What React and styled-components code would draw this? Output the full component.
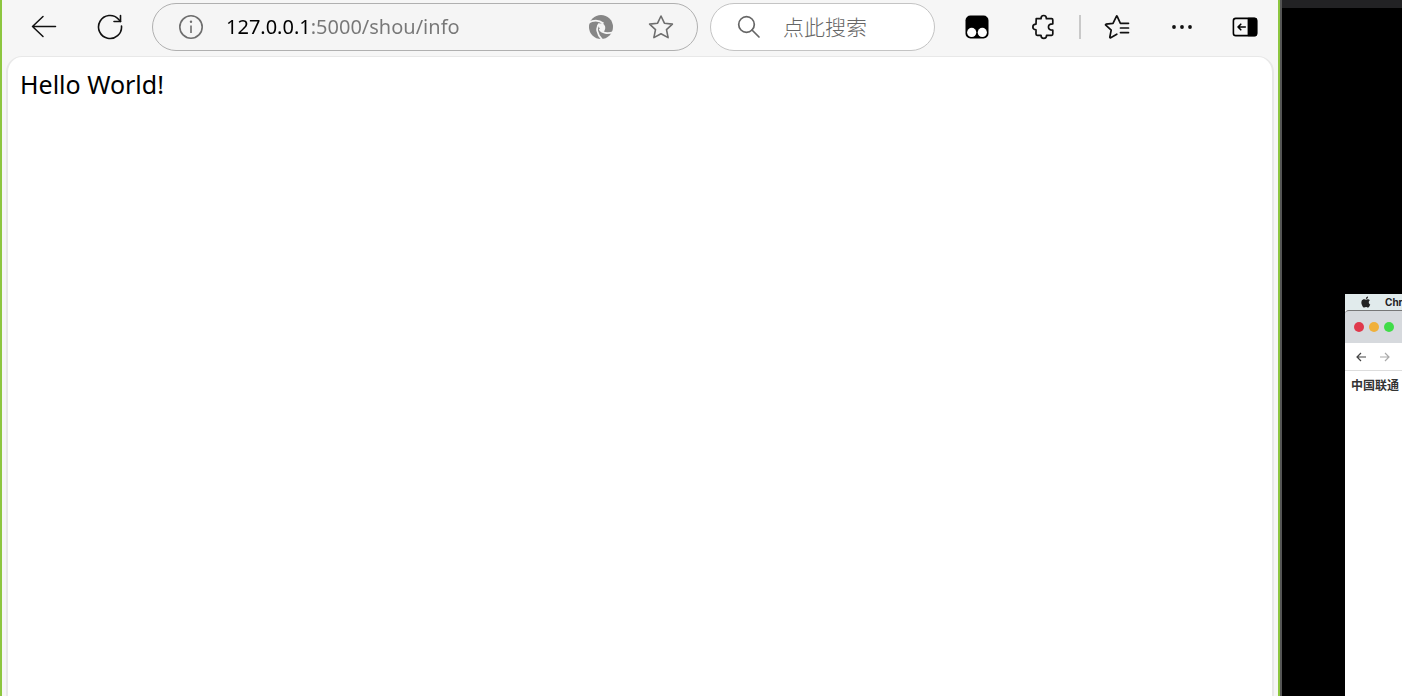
import React, { useState } from "react";
import styled, { createGlobalStyle } from "styled-components";

const GlobalStyle = createGlobalStyle`
  * {
    box-sizing: border-box;
  }
  body {
    margin: 0;
    background-color: #000;
    font-family: "Noto Sans", "Noto Sans CJK SC", sans-serif;
  }
`;

const BackIcon = () => (
  <svg width="26" height="26" viewBox="0 0 26 26" fill="none" stroke="#111" strokeWidth="1.5" strokeLinecap="round" strokeLinejoin="round">
    <path d="M24.5 12.5H1.5M12 2.5 1.5 12.5 12 22.5" />
  </svg>
);

const ReloadIcon = () => (
  <svg width="26" height="26" viewBox="0 0 26 26" fill="none" stroke="#111" strokeWidth="1.6" strokeLinecap="round" strokeLinejoin="round">
    <path d="M24.5 12A11.5 11.5 0 1 1 21.5 5.2L23.5 7.5" />
    <path d="M23.5 1.5V7.5H17" />
  </svg>
);

const InfoIcon = () => (
  <svg width="26" height="26" viewBox="0 0 26 26" fill="none" stroke="#6e6e6e" strokeWidth="1.6">
    <circle cx="13" cy="13" r="11.2" />
    <path d="M13 11.5V19" />
    <circle cx="13" cy="7.8" r="1.2" fill="#6e6e6e" stroke="none" />
  </svg>
);

const SwirlIcon = () => (
  <svg width="26" height="26" viewBox="0 0 26 26" fill="none" stroke="#f5f5f5" strokeWidth="1.7">
    <circle cx="13" cy="13" r="12" fill="#868686" stroke="none" />
    <path d="M0 9C5 6 11 5.800 15.500 9.500" />
    <path d="M11.500 9.500C7.500 13 8.500 20 14.500 26" />
    <path d="M11.500 15C13.500 19.500 20 20 26 17.800" />
    <path d="M9.800 11.500C11 9 14 8.500 16 10.500C18 12.800 17.500 16 15.500 18C13 17.500 11.800 15.800 11.500 14Z" fill="#f5f5f5" stroke="none" />
    <path d="M0 3V8.500L5 3Z" fill="#f5f5f5" stroke="none" />
  </svg>
);

const StarIcon = () => (
  <svg width="26" height="26" viewBox="0 0 26 26" fill="none" stroke="#6e6e6e" strokeWidth="1.6" strokeLinejoin="round">
    <path d="M13 2 16.4 9.2 24.4 10.1 18.5 15.6 20.1 23.6 13 19.7 5.9 23.6 7.5 15.6 1.6 10.1 9.6 9.2Z" />
  </svg>
);

const SearchIcon = () => (
  <svg width="24" height="24" viewBox="0 0 24 24" fill="none" stroke="#666" strokeWidth="1.7" strokeLinecap="round">
    <circle cx="9.5" cy="9.5" r="7.8" />
    <path d="M15 15 22 22" />
  </svg>
);

const MonkeyIcon = () => (
  <svg width="24" height="24" viewBox="0 0 24 24">
    <rect x=".5" y=".5" width="23" height="23" rx="5" />
    <circle cx="6.7" cy="17.4" r="4.6" fill="#fff" />
    <circle cx="17.3" cy="17.4" r="4.6" fill="#fff" />
  </svg>
);

const PuzzleIcon = () => (
  <svg width="26" height="26" viewBox="0 0 26 26" fill="none" stroke="#111" strokeWidth="1.7" strokeLinejoin="round">
    <path d="M5.2 4.7H10C10 .4 15.4 .4 15.4 4.7H20.6Q21.8 4.7 21.8 5.9V9.8C16 9.8 16 16.2 21.8 16.2V20.1Q21.8 21.3 20.6 21.3H15.6C15.6 25.5 10 25.5 10 21.3H6.2Q5 21.3 5 20.1V15.8C.8 15.8 .8 10.2 5 10.2Z" />
  </svg>
);

const FavoritesIcon = () => (
  <svg width="26" height="26" viewBox="0 0 26 26" fill="none" stroke="#111" strokeWidth="1.7" strokeLinecap="round" strokeLinejoin="round">
    <path d="M24.5 9.3H16.4L13.2 2.3Q12.8 1.6 12.4 2.3L9 9.3 2 10.2Q1.1 10.5 1.8 11.2L7.2 16.1 5.8 23.2Q5.9 24.1 6.7 23.7L12.8 20.2" />
    <path d="M16.5 14H24.5M16.5 18.6H24.5" />
  </svg>
);

const MoreIcon = () => (
  <svg width="26" height="26" viewBox="0 0 26 26" fill="#111">
    <circle cx="6" cy="13" r="1.900" />
    <circle cx="14" cy="13" r="1.900" />
    <circle cx="22" cy="13" r="1.900" />
  </svg>
);

const SidebarIcon = () => (
  <svg width="26" height="26" viewBox="0 0 26 26" fill="none" stroke="#000" strokeWidth="1.6" strokeLinecap="round" strokeLinejoin="round">
    <rect x="1.4" y="4.4" width="23.2" height="17.2" rx="2.4" />
    <path d="M16.400 4.5H22.4Q24.5 4.5 24.5 6.8V19.2Q24.5 21.5 22.4 21.5H16.400Z" fill="#000" />
    <path d="M13.3 13H6M8.8 10.2 6 13 8.8 15.8" />
  </svg>
);

const AppleIcon = () => (
  <svg width="12" height="12" viewBox="0 0 24 24" fill="#222">
    <path d="M17.5 12.5C17.5 10 19.500 8.700 19.800 8.400C18.500 6.600 16.600 6.300 15.900 6.300C14.200 6.100 13 7.300 12 7.300C11 7.300 9.800 6.300 8.300 6.300C6.300 6.300 4.500 7.500 3.600 9.200C1.700 12.700 3.100 17.600 5 20.300C5.900 21.600 7 23.100 8.400 23C9.800 22.900 10.400 22.100 12 22.100C13.600 22.100 14.200 23 15.600 23C17 23 18 21.700 18.900 20.300C20 18.800 20.400 17.300 20.500 17.200C20.400 17.100 17.500 16 17.500 12.500Z" />
    <path d="M15 4.600C15.800 3.600 16.300 2.300 16.100 1C15 1 13.700 1.700 12.900 2.600C12.200 3.400 11.600 4.700 11.800 5.900C13 6 14.200 5.400 15 4.600Z" />
  </svg>
);

const ArrowIcon = ({ color, right }) => (
  <svg width="10" height="10" viewBox="0 0 10 10" fill="none" stroke={color} strokeWidth="1.2">
    <path d={right ? "M0 5H9M5 1 9 5 5 9" : "M10 5H1M5 1 1 5 5 9"} />
  </svg>
);

export default function App() {
  const [url, setUrl] = useState("127.0.0.1:5000/shou/info");
  const [query, setQuery] = useState("");

  return (
    <Screen>
      <GlobalStyle />
      <Browser>
        <Toolbar>
          <NavGroup>
            <IconButton aria-label="返回"><BackIcon /></IconButton>
            <IconButton aria-label="刷新"><ReloadIcon /></IconButton>
          </NavGroup>
          <AddressBar>
            <IconButton aria-label="站点信息"><InfoIcon /></IconButton>
            <UrlInput
              aria-label="地址"
              value={url}
              spellCheck={false}
              onChange={(e) => setUrl(e.target.value)}
            />
            <IconGroup>
              <IconButton aria-label="Bing"><SwirlIcon /></IconButton>
              <IconButton aria-label="收藏"><StarIcon /></IconButton>
            </IconGroup>
          </AddressBar>
          <SearchBar>
            <SearchIcon />
            <SearchInput
              aria-label="搜索"
              placeholder="点此搜索"
              value={query}
              onChange={(e) => setQuery(e.target.value)}
            />
          </SearchBar>
          <Extensions>
            <IconButton aria-label="Tampermonkey"><MonkeyIcon /></IconButton>
            <IconButton aria-label="扩展"><PuzzleIcon /></IconButton>
          </Extensions>
          <Divider />
          <Actions>
            <IconButton aria-label="收藏夹"><FavoritesIcon /></IconButton>
            <IconButton aria-label="更多"><MoreIcon /></IconButton>
            <IconButton aria-label="侧边栏"><SidebarIcon /></IconButton>
          </Actions>
        </Toolbar>
        <Page>Hello World!</Page>
      </Browser>
      <Desktop>
        <TitleStrip />
        <RemoteWindow>
          <MenuBar>
            <AppleIcon />
            <span>Chr</span>
          </MenuBar>
          <TabBar>
            <Dot $color="#e0384b" />
            <Dot $color="#f0b03a" />
            <Dot $color="#40dc48" />
          </TabBar>
          <RemoteNav>
            <IconButton aria-label="后退"><ArrowIcon color="#444" /></IconButton>
            <IconButton aria-label="前进"><ArrowIcon color="#aaa" right /></IconButton>
          </RemoteNav>
          <Bookmark>中国联通</Bookmark>
        </RemoteWindow>
      </Desktop>
    </Screen>
  );
}

const Screen = styled.div`
  display: flex;
  min-height: 100vh;
  overflow: hidden;
`;

const Browser = styled.div`
  flex: 1;
  min-width: 0;
  display: flex;
  flex-direction: column;
  padding: 0 4px;
  background-color: #f6f6f6;
  border: solid #8dc63f;
  border-width: 0 2px;
`;

const Toolbar = styled.header`
  display: flex;
  align-items: center;
  height: 56px;
  padding: 0 16px 2px 25px;
`;

const IconButton = styled.button`
  display: flex;
  flex-shrink: 0;
  padding: 0;
  border: none;
  background: none;
  cursor: pointer;
`;

const NavGroup = styled.div`
  display: flex;
  gap: 40px;
  margin-right: 29px;
`;

const AddressBar = styled.div`
  flex: 1;
  min-width: 0;
  display: flex;
  align-items: center;
  height: 48px;
  padding: 0 23px 0 25px;
  border: 1px solid #b0b0b0;
  border-radius: 24px;
  background-color: #f5f5f5;
`;

/* the host part is darker than the port and path */
const UrlInput = styled.input`
  flex: 1;
  min-width: 0;
  margin-left: 22px;
  padding: 0;
  border: none;
  outline: none;
  color: transparent;
  caret-color: #000;
  background: linear-gradient(90deg, #000 84px, #777 84px);
  background-clip: text;
  font-family: inherit;
  font-size: 20px;
  line-height: 28px;
`;

const IconGroup = styled.div`
  display: flex;
  gap: 34px;
`;

const SearchBar = styled.label`
  display: flex;
  align-items: center;
  width: 225px;
  height: 48px;
  margin-left: 12px;
  padding: 0 26px;
  border: 1px solid #c4c4c4;
  border-radius: 24px;
  background-color: #fff;
`;

const SearchInput = styled.input`
  flex: 1;
  min-width: 0;
  margin-left: 22px;
  padding: 0;
  border: none;
  outline: none;
  background: none;
  font-family: inherit;
  font-size: 21px;
  font-weight: 300;
  &::placeholder {
    color: #666;
  }
`;

const Extensions = styled.div`
  display: flex;
  align-items: center;
  gap: 42px;
  margin: 0 22px 0 30px;
`;

const Divider = styled.div`
  width: 2px;
  height: 24px;
  background-color: #c9c9c9;
`;

const Actions = styled.div`
  display: flex;
  gap: 38px;
  margin-left: 23px;
`;

const Page = styled.main`
  flex: 1;
  padding: 9px 12px;
  border: solid #e8e8e8;
  border-width: 1px 2px 0;
  border-radius: 16px 16px 0 0;
  background-color: #fff;
  color: #000;
  font-size: 25px;
  line-height: 36px;
`;

const Desktop = styled.aside`
  display: flex;
  flex-direction: column;
  width: 122px;
  border-left: 2px solid #555;
  background-color: #000;
`;

const TitleStrip = styled.div`
  height: 8px;
  background-color: #222224;
`;

const RemoteWindow = styled.section`
  flex: 1;
  margin: 286px 0 0 63px;
  overflow: hidden;
  background-color: #fff;
  white-space: nowrap;
`;

const MenuBar = styled.div`
  display: flex;
  align-items: center;
  gap: 13px;
  height: 16px;
  padding-left: 15px;
  background-color: #e1ebec;
  color: #222;
  font-family: Inter, sans-serif;
  font-size: 10px;
  font-weight: 700;
  svg {
    flex-shrink: 0;
  }
`;

const TabBar = styled.div`
  display: flex;
  align-items: center;
  gap: 5px;
  height: 33px;
  padding-left: 9px;
  border-top: 1px solid #777;
  border-radius: 4px 0 0;
  background-color: #d6d9dd;
`;

const Dot = styled.span`
  width: 10px;
  height: 10px;
  border-radius: 50%;
  background-color: ${(props) => props.$color};
`;

const RemoteNav = styled.div`
  display: flex;
  align-items: center;
  gap: 14px;
  height: 28px;
  padding-left: 11px;
  border-bottom: 1px solid #ddd;
`;

const Bookmark = styled.div`
  padding: 5px 6px;
  color: #333;
  font-size: 12px;
  font-weight: 700;
  line-height: 20px;
`;
